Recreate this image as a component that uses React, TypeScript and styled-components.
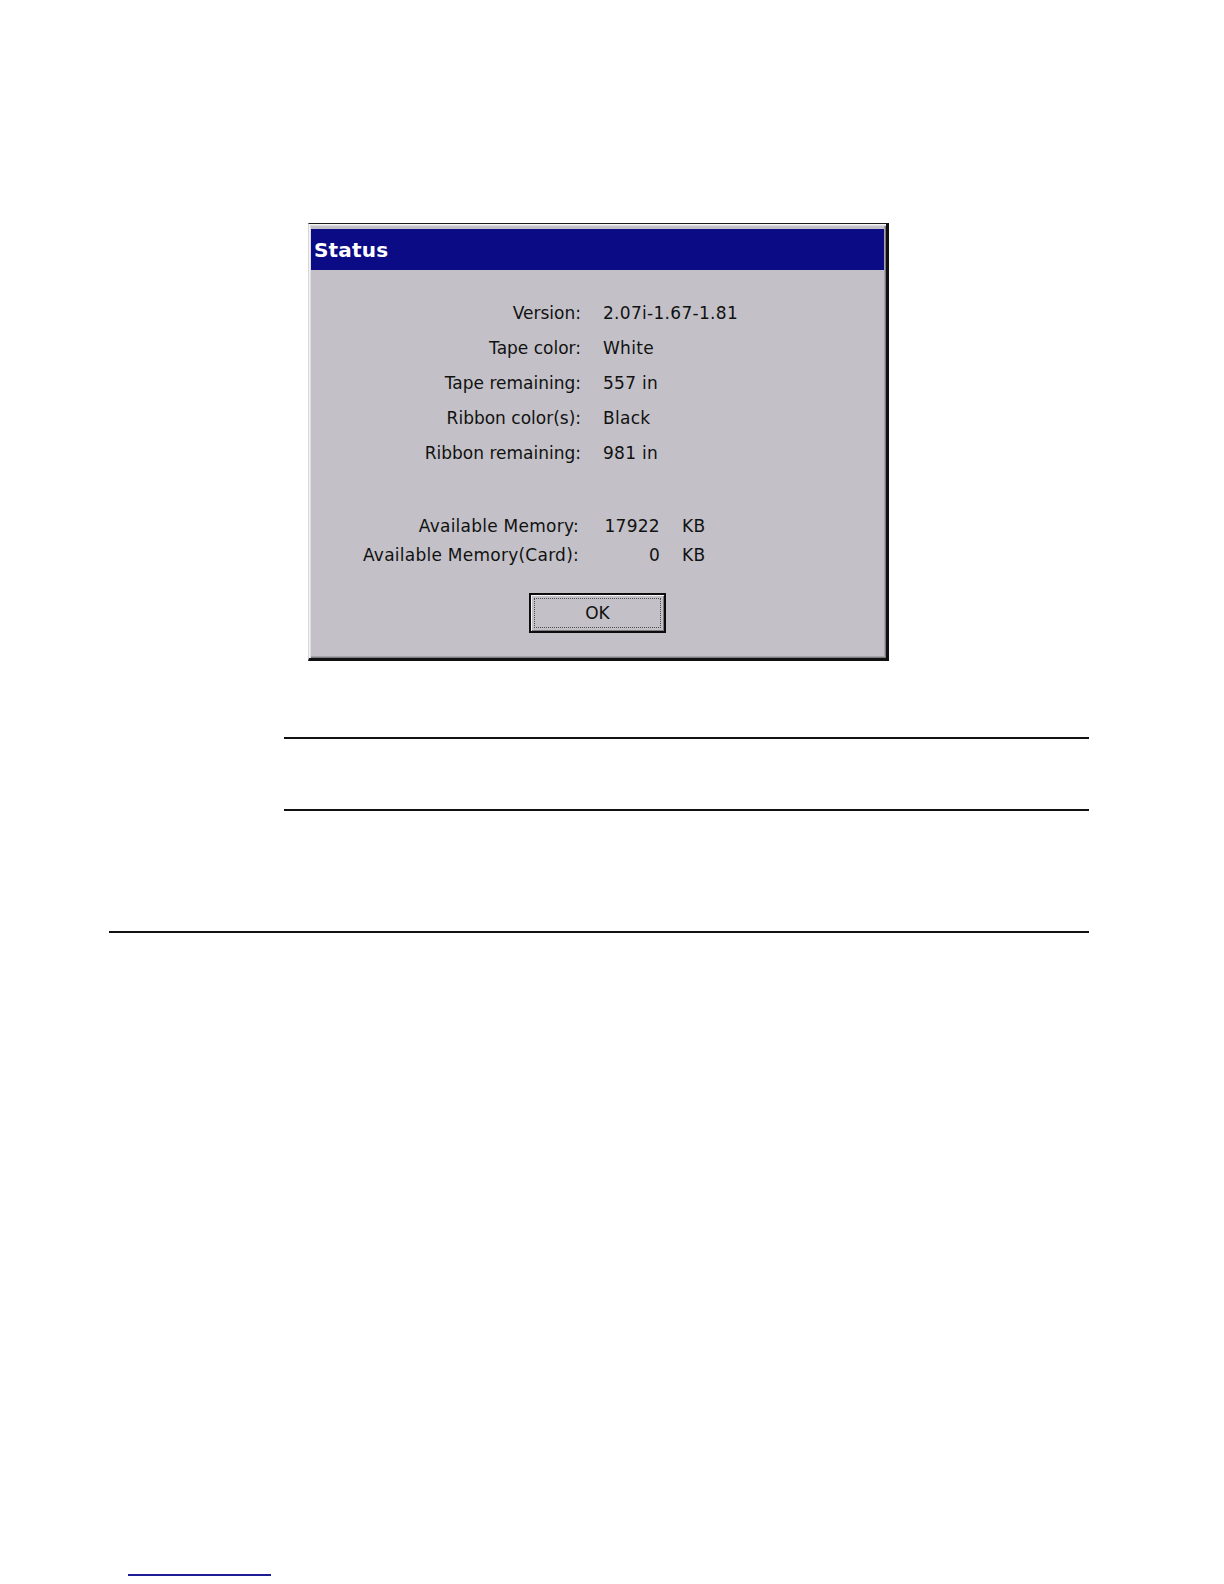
import React from 'react';
import styled, { createGlobalStyle } from 'styled-components';

const GlobalStyle = createGlobalStyle`
  html, body {
    margin: 0;
    padding: 0;
    background: #ffffff;
  }

  body {
    font-family: 'DejaVu Sans', 'Liberation Sans', sans-serif;
    color: #111111;
  }
`;

const statusRows = [
  { label: 'Version:', value: '2.07i-1.67-1.81' },
  { label: 'Tape color:', value: 'White' },
  { label: 'Tape remaining:', value: '557 in' },
  { label: 'Ribbon color(s):', value: 'Black' },
  { label: 'Ribbon remaining:', value: '981 in' },
];

const memoryRows = [
  { label: 'Available Memory:', value: '17922', unit: 'KB' },
  { label: 'Available Memory(Card):', value: '0', unit: 'KB' },
];

const App = () => (
  <>
    <GlobalStyle />
    <Page>
      <Figure>
        <Dialog>
          <TitleBar>
            <Title>Status</Title>
          </TitleBar>
          <DialogBody>
            <InfoGrid>
              {statusRows.map(row => (
                <React.Fragment key={row.label}>
                  <Label>{row.label}</Label>
                  <Value>{row.value}</Value>
                </React.Fragment>
              ))}
            </InfoGrid>
            <MemoryGrid>
              {memoryRows.map(row => (
                <React.Fragment key={row.label}>
                  <Label $wide>{row.label}</Label>
                  <Amount>{row.value}</Amount>
                  <Value>{row.unit}</Value>
                </React.Fragment>
              ))}
            </MemoryGrid>
            <ButtonRow>
              <OkButton type="button">OK</OkButton>
            </ButtonRow>
          </DialogBody>
        </Dialog>
      </Figure>

      <NoteBlock>
        <Rule />
        <NoteSpace />
        <Rule />
      </NoteBlock>

      <SectionRule />

      <Footer>
        <FooterLine />
      </Footer>
    </Page>
  </>
);

const Page = styled.div`
  display: flex;
  flex-direction: column;
  width: 1224px;
  min-height: 1584px;
  background: #ffffff;
`;

const Figure = styled.div`
  display: flex;
  padding-top: 223px;
  padding-left: 308px;
`;

const Dialog = styled.div`
  display: flex;
  flex-direction: column;
  width: 581px;
  height: 438px;
  box-sizing: border-box;
  padding: 5px 2px 2px 2px;
  border-style: solid;
  border-width: 1px 3px 3px 1px;
  border-color: #1a1a1a #101010 #101010 #d6d6d6;
  background: #c3c1c7;
  box-shadow:
    inset 1px 1px 0 #f4f4f4,
    inset 2px 2px 0 #dcdbe0,
    inset -1px -1px 0 #7c7a80,
    inset -2px -2px 0 #a6a4aa;
`;

const TitleBar = styled.div`
  display: flex;
  align-items: center;
  height: 41px;
  padding-left: 3px;
  background: #0b0b85;
`;

const Title = styled.span`
  color: #ffffff;
  font-size: 20px;
  font-weight: bold;
  letter-spacing: 0.2px;
`;

const DialogBody = styled.div`
  display: flex;
  flex-direction: column;
  flex: 1;
  padding-top: 25px;
`;

const InfoGrid = styled.div`
  display: grid;
  grid-template-columns: 270px auto;
  grid-auto-rows: 35px;
  column-gap: 22px;
  align-items: center;
  font-size: 17px;
`;

const MemoryGrid = styled.div`
  display: grid;
  grid-template-columns: 268px 59px auto;
  grid-auto-rows: 29px;
  column-gap: 22px;
  align-items: center;
  margin-top: 41px;
  font-size: 17px;
`;

const Label = styled.span<{ $wide?: boolean }>`
  justify-self: end;
  white-space: nowrap;
  letter-spacing: ${p => (p.$wide ? '0.25px' : '0')};
`;

const Value = styled.span`
  justify-self: start;
  white-space: nowrap;
  letter-spacing: 0.3px;
`;

const Amount = styled.span`
  justify-self: end;
  white-space: nowrap;
  letter-spacing: 0.3px;
`;

const ButtonRow = styled.div`
  display: flex;
  justify-content: center;
  margin-top: 24px;
`;

const OkButton = styled.button`
  width: 137px;
  height: 40px;
  padding: 0;
  border: 2px solid #0c0c0c;
  background: #c3c1c7;
  box-shadow:
    inset 1px 1px 0 #f4f4f4,
    inset -1px -1px 0 #7c7a80;
  outline: 1px dotted #4a4a4a;
  outline-offset: -6px;
  font-family: 'DejaVu Sans', 'Liberation Sans', sans-serif;
  font-size: 17px;
  color: #111111;
`;

const NoteBlock = styled.div`
  display: flex;
  flex-direction: column;
  margin-top: 76px;
  margin-left: 284px;
  width: 805px;
`;

const Rule = styled.div`
  height: 2px;
  background: #111111;
`;

const NoteSpace = styled.div`
  height: 70px;
`;

const SectionRule = styled.div`
  margin-top: 120px;
  margin-left: 109px;
  width: 980px;
  height: 2px;
  background: #111111;
`;

const Footer = styled.div`
  display: flex;
  padding-top: 641px;
  padding-left: 128px;
`;

const FooterLine = styled.div`
  width: 143px;
  height: 2px;
  background: #1c1c96;
`;

export default App;
